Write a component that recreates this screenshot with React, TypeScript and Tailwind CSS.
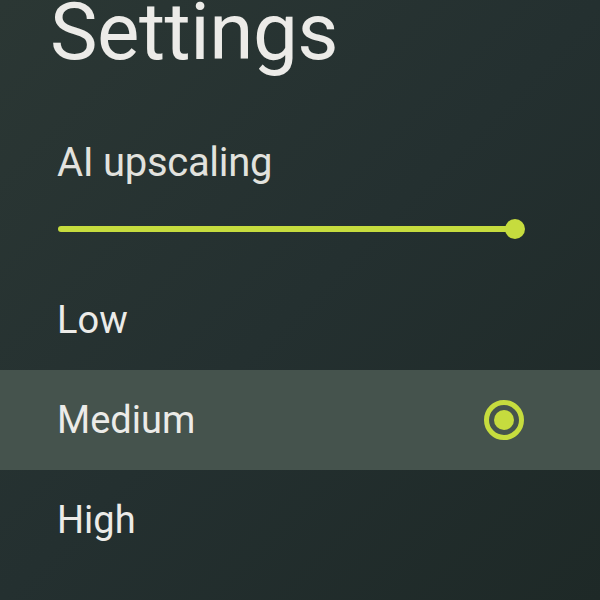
const options = [
  { label: "Low", selected: false },
  { label: "Medium", selected: true },
  { label: "High", selected: false },
];

function Radio() {
  return (
    <div className="flex h-[40px] w-[40px] items-center justify-center rounded-full border-[5px] border-[#c6dc3e]">
      <div className="h-[20px] w-[20px] rounded-full bg-[#c6dc3e]" />
    </div>
  );
}

export default function App() {
  return (
    <div className="h-[600px] w-[600px] overflow-hidden bg-gradient-to-br from-[#2b3734] via-[#243030] to-[#1e2927] font-['Roboto',sans-serif] text-[#ecebe8]">
      <h1 className="pl-[50px] text-[80px] leading-[64px] font-normal tracking-[-0.5px]">Settings</h1>

      <p className="mt-[75px] pl-[57px] text-[40px] leading-[48px] tracking-[-0.3px] text-[#e2e2de]">AI upscaling</p>

      {/* slider, value at max */}
      <div className="relative mt-[32px] ml-[58px] h-[20px] w-[457px]">
        <div className="absolute left-0 right-0 top-[7px] h-[6px] rounded-full bg-[#c6dc3e]" />
        <div className="absolute right-[-10px] top-0 h-[20px] w-[20px] rounded-full bg-[#c6dc3e]" />
      </div>

      <div className="mt-[31px] flex flex-col">
        {options.map((o) => (
          <div
            key={o.label}
            className={`flex h-[100px] items-center justify-between pl-[57px] pr-[76px] ${o.selected ? "bg-[#45534d]" : ""}`}
          >
            <span className="text-[38px] leading-[48px] text-[#ecebe8]">{o.label}</span>
            {o.selected && <Radio />}
          </div>
        ))}
      </div>
    </div>
  );
}
